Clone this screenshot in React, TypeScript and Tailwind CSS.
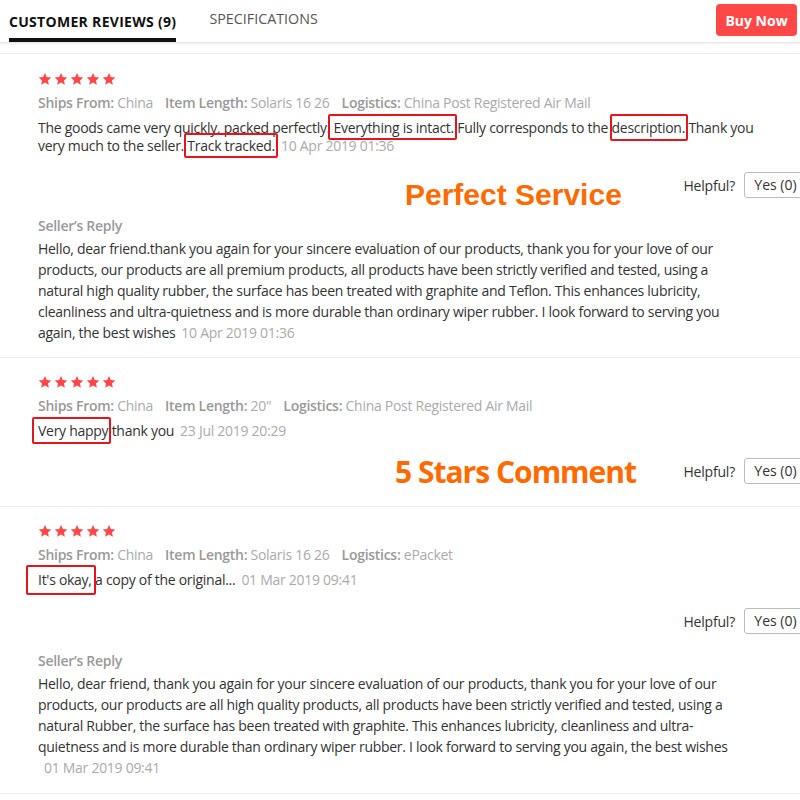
import React from "react";

const Stars = () => (
  <div className="flex gap-[2px] h-[14px]">
    {[0, 1, 2, 3, 4].map((i) => (
      <svg key={i} width="14" height="14" viewBox="0 0 24 24">
        <polygon
          points="12,1.5 15.1,8.6 22.8,9.3 17,14.4 18.7,22 12,18 5.3,22 7,14.4 1.2,9.3 8.9,8.6"
          fill="#ff4747"
        />
      </svg>
    ))}
  </div>
);

const Meta = ({ length, logistics }: { length: string; logistics: string }) => (
  <div className="mt-[7px] leading-[20px] flex gap-[12px] text-[#aaa] tracking-[-0.28px]">
    <span>
      <span className="font-semibold text-[#999]">Ships From:</span> China
    </span>
    <span>
      <span className="font-semibold text-[#999]">Item Length:</span> {length}
    </span>
    <span>
      <span className="font-semibold text-[#999]">Logistics:</span> {logistics}
    </span>
  </div>
);

const Boxed = ({
  children,
  box,
}: {
  children: React.ReactNode;
  box: string;
}) => (
  <span className="relative">
    {children}
    <span className={"absolute border-2 border-[#e8141b] rounded-[2px] pointer-events-none " + box} />
  </span>
);

const Helpful = () => (
  <div className="ml-auto flex items-center gap-[9px] -mr-[7px]">
    <span className="text-[#333] tracking-[-0.2px]">Helpful?</span>
    <button className="h-[26px] w-[63px] border border-[#bbb] rounded-[3px] bg-white text-[#333] leading-none">
      Yes (0)
    </button>
  </div>
);

const Date = ({ children }: { children: React.ReactNode }) => (
  <span className="text-[#aaa] ml-[6px]">{children}</span>
);

export default function App() {
  return (
    <div className="w-[800px] h-[800px] overflow-hidden bg-white text-[14px] text-[#333] font-['Open_Sans',sans-serif]">
      {/* header */}
      <div className="h-[43px] flex border-b border-[#e6e6e6] shadow-[0_1px_2px_rgba(0,0,0,0.06)]">
        <div className="ml-[9px] flex items-center h-[42px] border-b-[4px] border-[#111] pt-[4px] font-bold text-[#111] tracking-[0.3px]">
          CUSTOMER REVIEWS (9)
        </div>
        <div className="ml-[33px] flex items-center h-[42px] text-[#555] pb-[4px] text-[14.3px]">
          SPECIFICATIONS
        </div>
        <button className="ml-auto mr-[3px] mt-[4px] h-[32px] w-[81px] rounded-[4px] bg-[#ff4747] text-white font-bold text-[14px] font-['Open_Sans',sans-serif]">
          Buy Now
        </button>
      </div>
      <div className="h-[11px] border-b border-[#eee]" />

      {/* Review 1 */}
      <div className="pl-[38px] pt-[18px] pb-[14px] border-b border-[#eee]">
        <Stars />
        <Meta length="Solaris 16 26" logistics="China Post Registered Air Mail" />
        <p className="mt-[6px] leading-[18px] tracking-[-0.28px]">
          The goods came very quickly, packed perfectly.{" "}
          <Boxed box="-left-[5px] -right-[3px] -top-[4px] -bottom-[3px]">Everything is intact.</Boxed>{" "}
          Fully corresponds to the{" "}
          <Boxed box="-left-[2px] -right-[3px] -top-[4px] -bottom-[4px]">description.</Boxed> Thank you
          <br />
          very much to the seller.{" "}
          <Boxed box="-left-[3px] -right-[3px] -top-[3px] -bottom-[3px]">Track tracked.</Boxed>
          <Date>10 Apr 2019 01:36</Date>
        </p>
        <div className="mt-[17px] flex items-start">
          <span className="ml-[367px] mt-[8px] leading-[30px] text-[30px] font-bold text-[#ff6a00] font-['Liberation_Sans',Arial,sans-serif]">
            Perfect Service
          </span>
          <Helpful />
        </div>
        <div className="mt-[6px] leading-[20px] font-semibold text-[#999] tracking-[-0.28px]">Seller’s Reply</div>
        <p className="mt-[2px] leading-[21px] tracking-[-0.28px]">
          Hello, dear friend.thank you again for your sincere evaluation of our products, thank you for your love of our
          <br />
          products, our products are all premium products, all products have been strictly verified and tested, using a
          <br />
          natural high quality rubber, the surface has been treated with graphite and Teflon. This enhances lubricity,
          <br />
          cleanliness and ultra-quietness and is more durable than ordinary wiper rubber. I look forward to serving you
          <br />
          again, the best wishes
          <Date>10 Apr 2019 01:36</Date>
        </p>
      </div>

      {/* Review 2 */}
      <div className="pl-[38px] pt-[17px] pb-[19px] border-b border-[#eee]">
        <Stars />
        <Meta length={'20"'} logistics="China Post Registered Air Mail" />
        <p className="mt-[6px] leading-[18px] tracking-[-0.28px]">
          <Boxed box="-left-[6px] -right-[3px] -top-[4px] -bottom-[4px]">Very happy</Boxed> thank you
          <Date>23 Jul 2019 20:29</Date>
        </p>
        <div className="mt-[18px] flex items-start">
          <span className="ml-[357px] -mt-[1px] leading-[30px] text-[30px] font-bold tracking-[-1px] text-[#ff6a00] font-['Open_Sans',sans-serif]">
            5 Stars Comment
          </span>
          <Helpful />
        </div>
      </div>

      {/* Review 3 */}
      <div className="pl-[38px] pt-[17px] pb-[15px] border-b border-[#eee]">
        <Stars />
        <Meta length="Solaris 16 26" logistics="ePacket" />
        <p className="mt-[6px] leading-[18px] tracking-[-0.28px]">
          <Boxed box="-left-[12px] -right-[4px] -top-[5px] -bottom-[6px]">It's okay,</Boxed> a copy of the original...
          <Date>01 Mar 2019 09:41</Date>
        </p>
        <div className="mt-[19px] flex items-start">
          <Helpful />
        </div>
        <div className="mt-[17px] leading-[20px] font-semibold text-[#999] tracking-[-0.28px]">Seller’s Reply</div>
        <p className="mt-[2px] leading-[21px] tracking-[-0.28px]">
          Hello, dear friend, thank you again for your sincere evaluation of our products, thank you for your love of our
          <br />
          products, our products are all high quality products, all products have been strictly verified and tested, using a
          <br />
          natural Rubber, the surface has been treated with graphite. This enhances lubricity, cleanliness and ultra-
          <br />
          quietness and is more durable than ordinary wiper rubber. I look forward to serving you again, the best wishes
          <br />
          <Date>01 Mar 2019 09:41</Date>
        </p>
      </div>
    </div>
  );
}
